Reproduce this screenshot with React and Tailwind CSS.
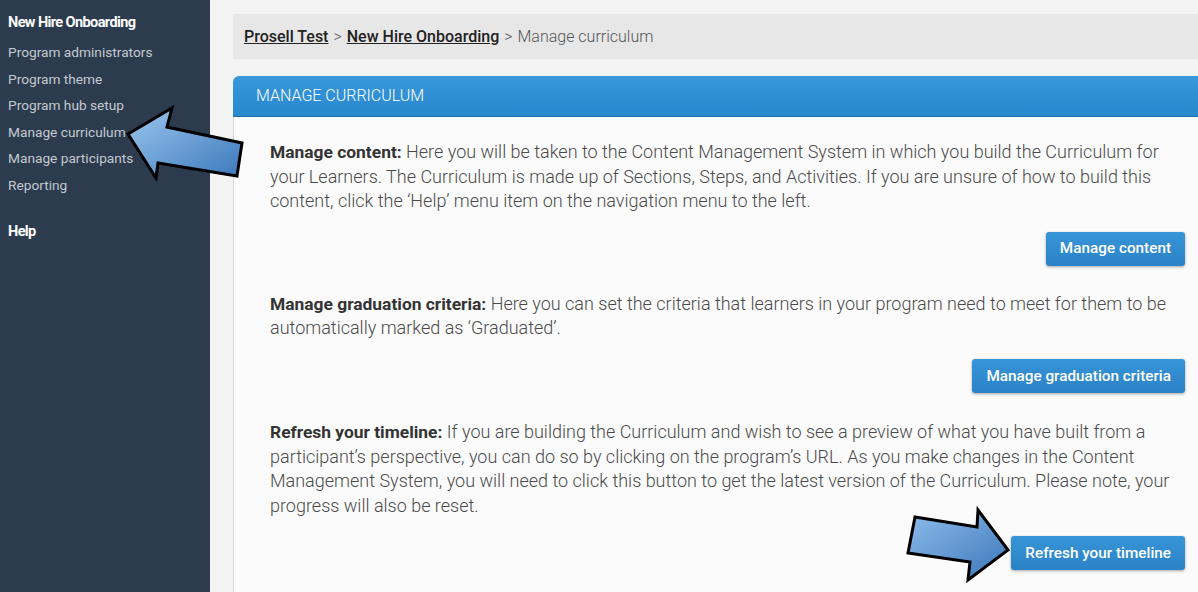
import React from "react";

const font = { fontFamily: "Roboto, 'Noto Sans', sans-serif" };

function Arrows() {
  return (
    <svg className="absolute left-0 top-0 pointer-events-none" width="1198" height="592" viewBox="0 0 1198 592">
      <defs>
        <linearGradient id="ga" x1="0" y1="0" x2="1" y2="1">
          <stop offset="0" stopColor="#9cc7ee" />
          <stop offset="1" stopColor="#3b78bd" />
        </linearGradient>
        <linearGradient id="gb" x1="0" y1="0" x2="1" y2="1">
          <stop offset="0" stopColor="#8fbdea" />
          <stop offset="1" stopColor="#3a76bb" />
        </linearGradient>
      </defs>
      <polygon
        points="128,134 172,108 167,127 242,143 237,176 158,163 156,178"
        fill="url(#ga)"
        stroke="#000"
        strokeWidth="3"
        strokeLinejoin="miter"
      />
      <polygon
        points="915,517 977,527 978,510 1008,550 968,580 970,562 908,553"
        fill="url(#gb)"
        stroke="#000"
        strokeWidth="3"
        strokeLinejoin="miter"
      />
    </svg>
  );
}

function Btn({ children }) {
  return (
    <button className="h-[34px] px-[14px] rounded-[3px] text-white text-[15.3px] font-medium bg-gradient-to-b from-[#3795d8] to-[#2b82c6] shadow-[0_1px_3px_rgba(0,0,0,0.35)]">
      {children}
    </button>
  );
}

export default function App() {
  return (
    <div className="relative w-[1198px] h-[592px] overflow-hidden flex bg-[#f3f3f3]" style={font}>
      <aside className="w-[210px] shrink-0 bg-[#2c3c4e] pt-[13px] pl-[8px]">
        <div className="text-white font-bold text-[14.5px] leading-[20px] tracking-[-0.6px]">New Hire Onboarding</div>
        <ul className="mt-[6px] text-[13.7px] text-[#c3c9d0] leading-[26.6px]">
          <li>Program administrators</li>
          <li>Program theme</li>
          <li>Program hub setup</li>
          <li>Manage curriculum</li>
          <li>Manage participants</li>
          <li>Reporting</li>
        </ul>
        <div className="mt-[23px] text-white font-bold text-[14.5px] leading-[20px] tracking-[-0.6px]">Help</div>
      </aside>
      <main className="pl-[23px] pt-[14px] w-[1011px] shrink-0">
        <div className="h-[45px] bg-[#e7e7e7] flex items-center pl-[11px] text-[16px] text-[#555]">
          <a className="underline font-medium text-[#222]">Prosell Test</a>
          <span className="mx-[5px] font-light">&gt;</span>
          <a className="underline font-medium text-[#222]">New Hire Onboarding</a>
          <span className="mx-[5px] font-light">&gt;</span>
          <span className="text-[#555] font-light">Manage curriculum</span>
        </div>
        <section className="mt-[17px] w-[988px]">
          <div className="h-[41px] rounded-t-[6px] bg-gradient-to-b from-[#3898da] to-[#2987cf] border-b border-[#1f6fae] flex items-center pl-[23px] text-white text-[16px] font-light uppercase">
            Manage curriculum
          </div>
          <div className="bg-[#fbfbfb] border-l border-[#d8d8d8] px-[36px] pt-[23px] h-[500px] text-[18px] leading-[24.6px] font-light text-[#4a4a4a]">
            <p>
              <b className="font-bold text-[17.4px] text-[#333]">Manage content:</b> Here you will be taken to the Content Management System in which you build the Curriculum for your Learners. The Curriculum is made up of Sections, Steps, and Activities. If you are unsure of how to build this content, click the ‘Help’ menu item on the navigation menu to the left.
            </p>
            <div className="flex justify-end mt-[18px]">
              <Btn>Manage content</Btn>
            </div>
            <p className="mt-[26px]">
              <b className="font-bold text-[17.4px] text-[#333]">Manage graduation criteria:</b> Here you can set the criteria that learners in your program need to meet for them to be automatically marked as ‘Graduated’.
            </p>
            <div className="flex justify-end mt-[18px]">
              <Btn>Manage graduation criteria</Btn>
            </div>
            <p className="mt-[27px]">
              <b className="font-bold text-[17.4px] text-[#333]">Refresh your timeline:</b> If you are building the Curriculum and wish to see a preview of what you have built from a participant’s perspective, you can do so by clicking on the program’s URL. As you make changes in the Content Management System, you will need to click this button to get the latest version of the Curriculum. Please note, your progress will also be reset.
            </p>
            <div className="flex justify-end mt-[18px]">
              <Btn>Refresh your timeline</Btn>
            </div>
          </div>
        </section>
      </main>
      <Arrows />
    </div>
  );
}
